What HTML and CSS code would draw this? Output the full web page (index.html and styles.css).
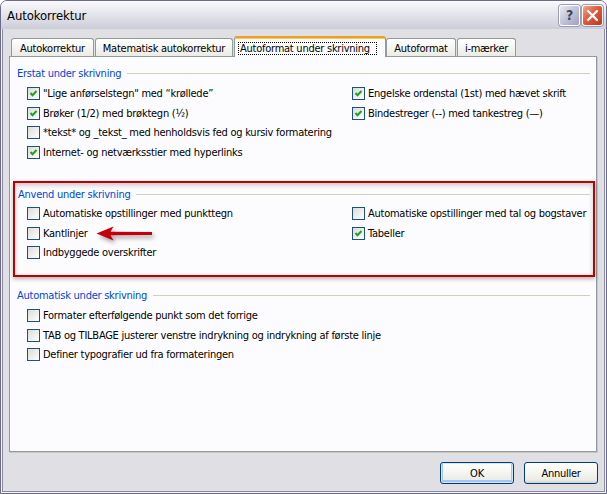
FILE: index.html
```html
<!DOCTYPE html>
<html lang="da">
<head>
<meta charset="utf-8">
<title>Autokorrektur</title>
<link rel="stylesheet" href="styles.css">
</head>
<body>
<div class="window">
  <div class="titlebar">
    <span class="title">Autokorrektur</span>
    <span class="tb-btn help">?</span>
    <span class="tb-btn close"><svg width="13" height="13" viewBox="0 0 13 13"><path d="M2 2 L11 11 M11 2 L2 11" stroke="#fff" stroke-width="2.4" stroke-linecap="round"/></svg></span>
  </div>
  <div class="body">
    <div class="tabs">
      <div class="tab w1">Autokorrektur</div>
      <div class="tab w2">Matematisk autokorrektur</div>
      <div class="tab sel"><span class="focus">Autoformat under skrivning</span></div>
      <div class="tab w4">Autoformat</div>
      <div class="tab w5">i-mærker</div>
    </div>
    <div class="panel">
      <div class="group g1">
        <div class="gh"><span>Erstat under skrivning</span></div>
        <div class="cols">
          <div class="col left">
            <div class="row"><span class="cb on"><svg viewBox="0 0 11 11"><polyline points="2.5,5 4.5,7.2 8.5,3" /></svg></span>"Lige anførselstegn" med “krøllede”</div>
            <div class="row"><span class="cb on"><svg viewBox="0 0 11 11"><polyline points="2.5,5 4.5,7.2 8.5,3" /></svg></span>Brøker (1/2) med brøktegn (½)</div>
            <div class="row"><span class="cb"></span>*tekst* og _tekst_ med henholdsvis fed og kursiv formatering</div>
            <div class="row"><span class="cb on"><svg viewBox="0 0 11 11"><polyline points="2.5,5 4.5,7.2 8.5,3" /></svg></span>Internet- og netværksstier med hyperlinks</div>
          </div>
          <div class="col right">
            <div class="row"><span class="cb on"><svg viewBox="0 0 11 11"><polyline points="2.5,5 4.5,7.2 8.5,3" /></svg></span>Engelske ordenstal (1st) med hævet skrift</div>
            <div class="row"><span class="cb on"><svg viewBox="0 0 11 11"><polyline points="2.5,5 4.5,7.2 8.5,3" /></svg></span>Bindestreger (--) med tankestreg (—)</div>
          </div>
        </div>
      </div>
      <div class="redbox">
        <div class="group g2">
          <div class="gh"><span>Anvend under skrivning</span></div>
          <div class="cols">
            <div class="col left">
              <div class="row"><span class="cb"></span>Automatiske opstillinger med punkttegn</div>
              <div class="row"><span class="cb"></span>Kantlinjer</div>
              <div class="row"><span class="cb"></span>Indbyggede overskrifter</div>
            </div>
            <div class="col right">
              <div class="row"><span class="cb"></span>Automatiske opstillinger med tal og bogstaver</div>
              <div class="row"><span class="cb on"><svg viewBox="0 0 11 11"><polyline points="2.5,5 4.5,7.2 8.5,3" /></svg></span>Tabeller</div>
            </div>
          </div>
        </div>
        <svg class="arrow" width="62" height="20" viewBox="0 0 62 20"><path d="M1.5 9.5 L18.5 2.5 L15.5 7.8 L57 8 L57 11 L15.5 11.2 L18.5 16.5 Z" fill="#c4000c"/></svg>
      </div>
      <div class="group g3">
        <div class="gh"><span>Automatisk under skrivning</span></div>
        <div class="col">
          <div class="row"><span class="cb"></span>Formater efterfølgende punkt som det forrige</div>
          <div class="row"><span class="cb"></span>TAB og TILBAGE justerer venstre indrykning og indrykning af første linje</div>
          <div class="row"><span class="cb"></span>Definer typografier ud fra formateringen</div>
        </div>
      </div>
    </div>
    <div class="buttons">
      <button class="btn ok">OK</button>
      <button class="btn">Annuller</button>
    </div>
  </div>
</div>
</body>
</html>
```
FILE: styles.css
```css
html, body {
  margin: 0;
  padding: 0;
  background: #ffffff;
}
body {
  font-family: "DejaVu Sans Condensed", "DejaVu Sans", "Liberation Sans", sans-serif;
  font-stretch: condensed;
  font-size: 11px;
  letter-spacing: -0.25px;
  color: #000;
}
.window {
  width: 607px;
  height: 494px;
  box-sizing: border-box;
  border: 1px solid #6c6c8a;
  border-radius: 7px 7px 0 0;
  background: #f4f4f8;
  display: flex;
  flex-direction: column;
  overflow: hidden;
}
.titlebar {
  flex: none;
  height: 28px;
  display: flex;
  align-items: center;
  padding: 0 3px 0 6px;
  background: linear-gradient(#fbfbfd 0%, #eeeef4 25%, #dfdfe8 60%, #cdcdda 100%);
}
.title {
  flex: 1;
  font-size: 13px;
  letter-spacing: -0.1px;
  padding-top: 1px;
}
.tb-btn {
  width: 21px;
  height: 21px;
  box-sizing: border-box;
  border: 1px solid #ffffff;
  border-radius: 3px;
  display: flex;
  align-items: center;
  justify-content: center;
  margin-left: 1px;
  box-shadow: 0 0 0 1px #9d9db5;
}
.help {
  background: linear-gradient(135deg, #e9eaf3 0%, #c4c6da 45%, #9fa1bd 100%);
  color: #43435f;
  font-family: "DejaVu Sans", sans-serif;
  font-weight: bold;
  font-size: 14px;
}
.close {
  background: linear-gradient(135deg, #f3a68f 0%, #e05a3c 45%, #c0381c 100%);
  margin-left: 2px;
}
.body {
  flex: 1;
  margin: 0 1px 1px;
  border: 1px solid #8a8aa6;
  border-top: none;
  background: #e0dfe3;
  padding: 7px 7px 0 6px;
  display: flex;
  flex-direction: column;
}
.tabs {
  height: 20px;
  display: flex;
  align-items: flex-end;
  padding-left: 2px;
  position: relative;
  z-index: 1;
}
.tab {
  height: 18px;
  box-sizing: border-box;
  border: 1px solid #919b9c;
  border-bottom: none;
  border-radius: 3px 3px 0 0;
  background: linear-gradient(#ffffff 0%, #f7f7f4 40%, #ecebe5 100%);
  display: flex;
  align-items: center;
  justify-content: center;
  margin-right: 1px;
  padding-top: 2px;
}
.w1 { width: 83px; }
.w2 { width: 138px; }
.w4 { width: 70px; margin-right: 1px; }
.w5 { width: 59px; }
.tab.sel {
  width: 152px;
  height: 21px;
  margin-bottom: -1px;
  margin-right: 0;
  background: #fcfcfe;
  border-top: 2px solid #e99f2f;
  box-shadow: inset 0 1px 0 #ffc84a;
  padding-top: 1px;
  justify-content: flex-start;
  padding-left: 3px;
}
.focus {
  border: 1px dotted #000;
  padding: 0 6px 0 1px;
  line-height: 11px;
}
.panel {
  height: 396px;
  box-sizing: border-box;
  border: 1px solid #919b9c;
  background: #fcfcfe;
  box-shadow: 1px 1px 0 #c8c8c2;
  position: relative;
}
.group {
  display: flex;
  flex-direction: column;
}
.gh {
  height: 14px;
  display: flex;
  align-items: center;
  color: #0046d5;
}
.gh::after {
  content: "";
  flex: 1;
  height: 1px;
  background: #d0d0bf;
  margin-left: 6px;
}
.cols {
  display: flex;
}
.col {
  display: flex;
  flex-direction: column;
}
.col.left {
  width: 325px;
  flex: none;
}
.row {
  height: 19.5px;
  display: flex;
  align-items: center;
  white-space: nowrap;
}
.cb {
  width: 13px;
  height: 13px;
  box-sizing: border-box;
  border: 1px solid #1c5180;
  background: linear-gradient(135deg, #dcdcd7 0%, #f4f4f2 70%, #ffffff 100%);
  margin-right: 3px;
  flex: none;
  display: flex;
}
.cb svg {
  width: 11px;
  height: 11px;
}
.cb polyline {
  fill: none;
  stroke: #21a121;
  stroke-width: 2;
}
.g1 {
  padding: 9px 6px 0 7px;
}
.g1 .cols, .g3 .col {
  margin-top: 4px;
  padding-left: 10px;
}
.redbox {
  margin: 19px 1px 0 3px;
  border: 2px solid #c00000;
  padding: 4px 3px 12.5px 3px;
  position: relative;
  box-shadow: inset 0 2px 5px rgba(0, 0, 0, 0.22), 0 2px 4px rgba(0, 0, 0, 0.28);
}
.g2 .cols {
  margin-top: 3px;
  padding-left: 9px;
}
.arrow {
  position: absolute;
  left: 80px;
  top: 41px;
  filter: drop-shadow(2px 3px 2px rgba(0, 0, 0, 0.35));
}
.g3 {
  padding: 11px 6px 0 7px;
}
.buttons {
  display: flex;
  justify-content: flex-end;
  gap: 10px;
  margin-top: 10px;
  margin-right: -1px;
}
.btn {
  width: 74px;
  height: 22px;
  box-sizing: border-box;
  border: 1px solid #003c74;
  border-radius: 3px;
  background: linear-gradient(#ffffff 0%, #f4f4f0 50%, #ecebe6 85%, #d6d0c5 100%);
  font-family: inherit;
  font-stretch: condensed;
  font-size: 11px;
  letter-spacing: -0.25px;
  color: #000;
  padding: 0;
}
.btn.ok {
  box-shadow: inset 0 0 0 1px #cee7ff, inset 0 -1px 0 2px #a8c4f0;
}
```
